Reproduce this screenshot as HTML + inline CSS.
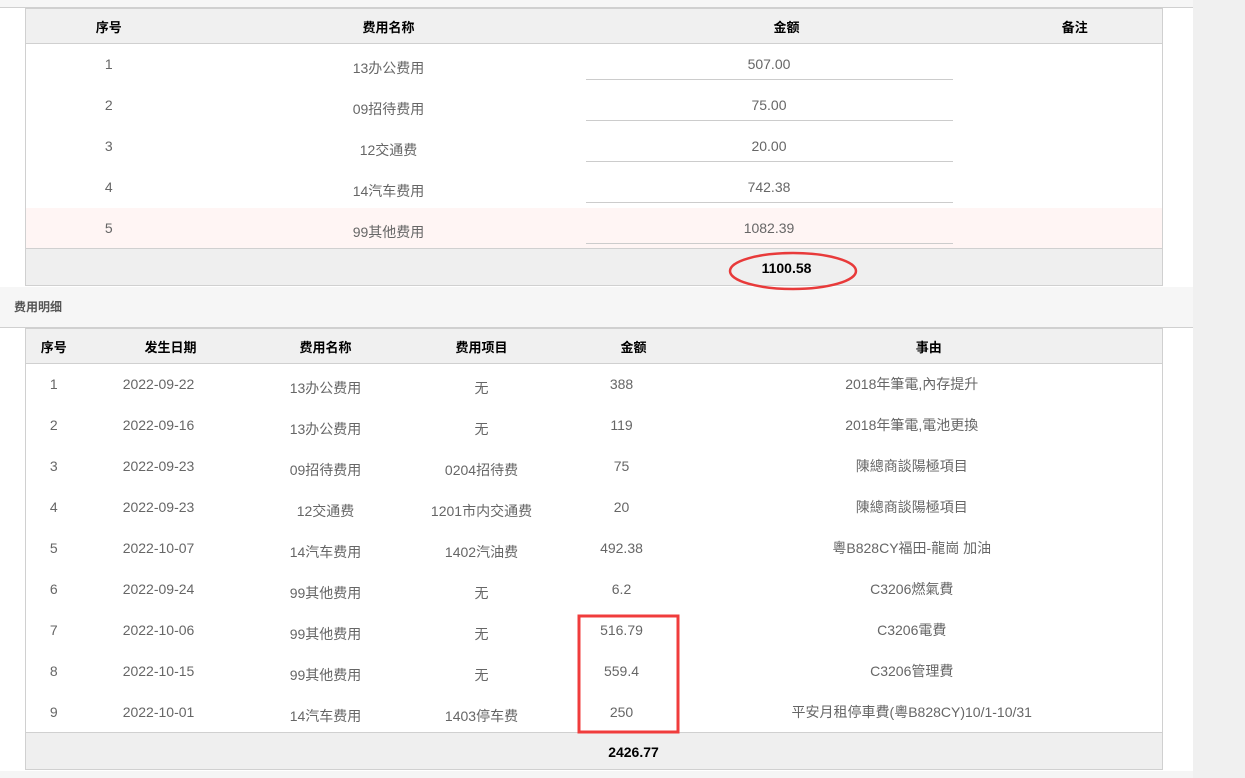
<!DOCTYPE html>
<html><head><meta charset="utf-8"><style>
*{box-sizing:border-box;margin:0;padding:0}
body{width:1245px;height:778px;overflow:hidden;background:#f0f0f0;font-family:"Liberation Sans","Noto Sans CJK SC",sans-serif;position:relative}
#panel{position:absolute;left:0;top:0;width:1193px;height:778px;background:#fff}
.strip{position:absolute;left:0;width:1193px;background:#f6f6f6}
table{position:absolute;left:25px;width:1137px;border-collapse:collapse;table-layout:fixed;border:1px solid #d0d0d0}
th{background:#f0f0f0;font-size:13px;font-weight:bold;color:#000;height:35px;text-align:center;border-bottom:1px solid #d0d0d0}
td{height:41px;font-size:14px;color:#666;text-align:center;vertical-align:top;line-height:16px}
td.n{padding-top:12px}
td.m{padding-top:16px}
td.a{padding-top:12px}
td.a div{border-bottom:1px solid #ccc;height:24px;margin:0 35px 0 0}
tr.pink td{background:#fff5f4}
tr.ft td{background:#efefef;height:37px;border-top:1px solid #d0d0d0;color:#000;font-weight:bold;vertical-align:middle}
</style></head><body>
<div id="panel"></div>
<div class="strip" style="top:0;height:8px;border-bottom:1px solid #d0d0d0"></div>
<table style="top:8px">
<colgroup><col style="width:166px"><col style="width:394px"><col style="width:402px"><col style="width:175px"></colgroup>
<tr><th>序号</th><th>费用名称</th><th>金额</th><th>备注</th></tr>
<tr><td class="n">1</td><td class="m">13办公费用</td><td class="a"><div>507.00</div></td><td></td></tr>
<tr><td class="n">2</td><td class="m">09招待费用</td><td class="a"><div>75.00</div></td><td></td></tr>
<tr><td class="n">3</td><td class="m">12交通费</td><td class="a"><div>20.00</div></td><td></td></tr>
<tr><td class="n">4</td><td class="m">14汽车费用</td><td class="a"><div>742.38</div></td><td></td></tr>
<tr class="pink"><td class="n">5</td><td class="m">99其他费用</td><td class="a"><div>1082.39</div></td><td></td></tr>
<tr class="ft"><td></td><td></td><td style="padding-top:2px">1100.58</td><td></td></tr>
</table>
<div class="strip" style="top:287px;height:41px;border-bottom:1px solid #d0d0d0;font-size:12px;font-weight:bold;color:#555;padding:12px 0 0 14px;line-height:16px">费用明细</div>
<table style="top:328px">
<colgroup><col style="width:56px"><col style="width:178px"><col style="width:132px"><col style="width:180px"><col style="width:124px"><col style="width:467px"></colgroup>
<tr><th>序号</th><th>发生日期</th><th>费用名称</th><th>费用项目</th><th>金额</th><th>事由</th></tr>
<tr><td class="n">1</td><td class="n d">2022-09-22</td><td class="m">13办公费用</td><td class="m">无</td><td class="n d">388</td><td class="n r">2018年筆電,內存提升</td></tr>
<tr><td class="n">2</td><td class="n d">2022-09-16</td><td class="m">13办公费用</td><td class="m">无</td><td class="n d">119</td><td class="n r">2018年筆電,電池更換</td></tr>
<tr><td class="n">3</td><td class="n d">2022-09-23</td><td class="m">09招待费用</td><td class="m">0204招待费</td><td class="n d">75</td><td class="n r">陳總商談陽極項目</td></tr>
<tr><td class="n">4</td><td class="n d">2022-09-23</td><td class="m">12交通费</td><td class="m">1201市内交通费</td><td class="n d">20</td><td class="n r">陳總商談陽極項目</td></tr>
<tr><td class="n">5</td><td class="n d">2022-10-07</td><td class="m">14汽车费用</td><td class="m">1402汽油费</td><td class="n d">492.38</td><td class="n r">粵B828CY福田-龍崗 加油</td></tr>
<tr><td class="n">6</td><td class="n d">2022-09-24</td><td class="m">99其他费用</td><td class="m">无</td><td class="n d">6.2</td><td class="n r">C3206燃氣費</td></tr>
<tr><td class="n">7</td><td class="n d">2022-10-06</td><td class="m">99其他费用</td><td class="m">无</td><td class="n d">516.79</td><td class="n r">C3206電費</td></tr>
<tr><td class="n">8</td><td class="n d">2022-10-15</td><td class="m">99其他费用</td><td class="m">无</td><td class="n d">559.4</td><td class="n r">C3206管理費</td></tr>
<tr><td class="n">9</td><td class="n d">2022-10-01</td><td class="m">14汽车费用</td><td class="m">1403停车费</td><td class="n d">250</td><td class="n r">平安月租停車費(粵B828CY)10/1-10/31</td></tr>
<tr class="ft"><td></td><td></td><td></td><td></td><td style="padding-top:2px">2426.77</td><td></td></tr>
</table>
<style>td.d{padding-right:24px}td.r{padding-right:34px}</style>
<div class="strip" style="top:771px;height:7px;background:#f5f5f5"></div>
<svg style="position:absolute;left:0;top:0" width="1245" height="778"><ellipse cx="793" cy="271" rx="63" ry="18" fill="none" stroke="#e83a3a" stroke-width="2.5"/><rect x="579" y="616" width="99" height="116" fill="none" stroke="#f03c3c" stroke-width="3"/></svg>
</body></html>
